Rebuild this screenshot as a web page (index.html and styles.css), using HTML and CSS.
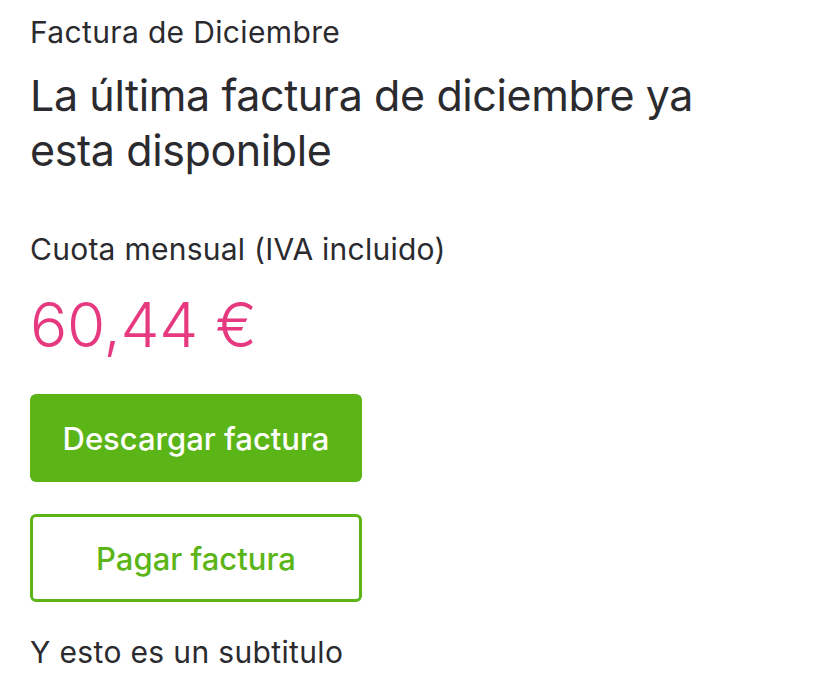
FILE: index.html
```html
<!DOCTYPE html>
<html lang="es">
<head>
<meta charset="utf-8">
<link rel="stylesheet" href="styles.css">
</head>
<body>
<main class="card">
  <p class="eyebrow">Factura de Diciembre</p>
  <h1 class="title">La última factura de diciembre ya esta disponible</h1>
  <p class="label">Cuota mensual (IVA incluido)</p>
  <p class="amount">60,44 €</p>
  <div class="actions">
    <button class="btn btn-primary">Descargar factura</button>
    <button class="btn btn-secondary">Pagar factura</button>
  </div>
  <p class="subtitle">Y esto es un subtitulo</p>
</main>
</body>
</html>
```

FILE: styles.css
```css
html, body {
  margin: 0;
  padding: 0;
  background: #ffffff;
}
body {
  font-family: Inter, "Noto Sans", sans-serif;
  color: #2b2b2f;
}
.card {
  display: flex;
  flex-direction: column;
  align-items: flex-start;
  padding: 12px 0 0 30px;
  width: 760px;
}
.eyebrow {
  margin: 0;
  font-size: 30px;
  line-height: 40px;
  letter-spacing: 0.35px;
}
.title {
  margin: 16px 0 0;
  font-size: 43px;
  font-weight: 400;
  line-height: 55px;
  letter-spacing: -0.4px;
  width: 700px;
}
.label {
  margin: 51px 0 0;
  font-size: 30px;
  line-height: 40px;
  letter-spacing: 0.25px;
}
.amount {
  margin: 21px 0 0;
  font-size: 62px;
  font-weight: 300;
  line-height: 70px;
  letter-spacing: -0.3px;
  color: #e6397f;
}
.actions {
  display: flex;
  flex-direction: column;
  gap: 32px;
  margin-top: 34px;
}
.btn {
  width: 332px;
  height: 88px;
  border-radius: 6px;
  font-family: inherit;
  font-size: 31px;
  font-weight: 500;
  display: flex;
  align-items: center;
  justify-content: center;
  padding: 0;
  cursor: pointer;
}
.btn-primary {
  background: #5cb517;
  color: #ffffff;
  border: none;
}
.btn-secondary {
  background: #ffffff;
  color: #5cb517;
  border: 3px solid #5cb517;
}
.subtitle {
  margin: 30px 0 0;
  font-size: 30px;
  line-height: 40px;
  letter-spacing: 0.35px;
}
```
